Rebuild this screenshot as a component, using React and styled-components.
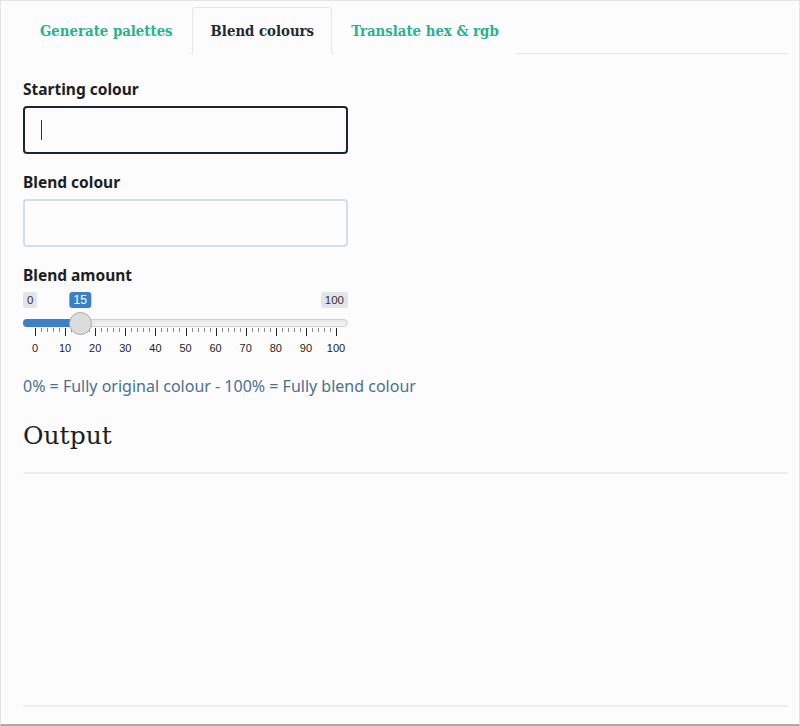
import React from "react";
import styled, { createGlobalStyle } from "styled-components";

const Global = createGlobalStyle`
  html, body { margin: 0; padding: 0; background: #fcfcfc; }
  * { box-sizing: border-box; }
`;

const Frame = styled.div`
  width: 800px;
  height: 726px;
  background: #fcfcfc;
  border: 1px solid #e4e4e4;
  border-bottom: 2px solid #ababab;
  padding: 6px 11px 0 22px;
  display: flex;
  flex-direction: column;
  font-family: "Noto Sans", sans-serif;
  color: #1b1f24;
`;

const TabList = styled.ul`
  list-style: none;
  margin: 0;
  padding: 0;
  display: flex;
  border-bottom: 1px solid #e3e7ea;
  height: 47px;
`;

const Tab = styled.li`
  margin-right: 2px;
  margin-bottom: -1px;
  padding: ${(p) => (p.$active ? "0 17px 0 18px" : "0 16px")};
  display: flex;
  align-items: center;
  border: 1px solid ${(p) => (p.$active ? "#e3e7ea" : "transparent")};
  border-bottom-color: ${(p) => (p.$active ? "#fcfcfc" : "transparent")};
  border-radius: 4px 4px 0 0;
  background: #fcfcfc;
  font-family: "DejaVu Serif", serif;
  font-weight: bold;
  font-stretch: condensed;
  font-size: 14.8px;
  color: ${(p) => (p.$active ? "#232a33" : "#25b48b")};
  white-space: nowrap;
`;

const Panel = styled.div`
  width: 325px;
  display: flex;
  flex-direction: column;
`;

const Label = styled.label`
  display: block;
  font-weight: 700;
  font-size: 15.5px;
  line-height: 24px;
  margin-top: ${(p) => p.$top || 16}px;
  margin-bottom: 5px;
  color: #1b1f24;
`;

const Field = styled.div`
  position: relative;
  height: 48px;
`;

const Input = styled.input`
  width: 100%;
  height: 48px;
  border: 2px solid ${(p) => (p.$focus ? "#1c2632" : "#d6dee4")};
  border-radius: 4px;
  background: #fcfcfc;
  outline: none;
  padding: 0 16px;
  font-size: 16px;
  font-family: "Noto Sans", sans-serif;
`;

const Caret = styled.span`
  position: absolute;
  left: 18px;
  top: 14px;
  width: 1px;
  height: 20px;
  background: #333;
`;

const Slider = styled.div`
  position: relative;
  height: 64px;
  font-family: "Liberation Sans", Arial, sans-serif;
`;

const Badge = styled.span`
  position: absolute;
  top: 0;
  height: 16px;
  line-height: 16px;
  padding: 0 4px;
  border-radius: 3px;
  font-size: 11.5px;
  background: ${(p) => (p.$value ? "#3b7fc4" : "#e1e4e8")};
  color: ${(p) => (p.$value ? "#fff" : "#333")};
  ${(p) => (p.$value ? "font-size: 12px;" : "")}
`;

const Track = styled.div`
  position: absolute;
  left: 0;
  right: 0;
  top: 27px;
  height: 8px;
  border-radius: 4px;
  border: 1px solid #cfcfcf;
  background: linear-gradient(#e6e6e6, #f4f4f4);
`;

const Bar = styled.div`
  position: absolute;
  left: 0;
  top: 27px;
  height: 8px;
  border-radius: 4px 0 0 4px;
  background: #3b7fc4;
`;

const Handle = styled.div`
  position: absolute;
  top: 20px;
  width: 23px;
  height: 23px;
  border-radius: 50%;
  background: #dcdcdc;
  border: 1px solid #a9a9a9;
`;

const Tick = styled.span`
  position: absolute;
  top: 36px;
  width: 1px;
  height: ${(p) => (p.$major ? 8 : 4)}px;
  background: ${(p) => (p.$major ? "#222" : "#8a8a8a")};
`;

const TickText = styled.span`
  position: absolute;
  top: 50px;
  font-size: 11px;
  line-height: 12px;
  color: #222;
  transform: translateX(-50%);
`;

const Help = styled.p`
  margin: 18px 0 0;
  font-size: 16px;
  line-height: 24px;
  color: #4b7090;
  white-space: nowrap;
`;

const Heading = styled.h2`
  margin: 22px 0 0;
  font-family: "DejaVu Serif", serif;
  font-weight: normal;
  font-size: 25px;
  line-height: 32px;
  color: #1b1f24;
`;

const OutputBox = styled.div`
  margin-top: 20px;
  height: 235px;
  border-top: 2px solid #eceeee;
  border-bottom: 2px solid #eceeee;
`;

const LO = 12;
const RANGE = 301;
const VALUE = 15;
const pos = (v) => LO + (v / 100) * RANGE;

export default function App() {
  const ticks = [];
  for (let v = 0; v <= 100; v += 2) ticks.push(v);
  const labels = [0, 10, 20, 30, 40, 50, 60, 70, 80, 90, 100];
  return (
    <>
      <Global />
      <Frame>
        <TabList>
          <Tab>Generate palettes</Tab>
          <Tab $active>Blend colours</Tab>
          <Tab>Translate hex &amp; rgb</Tab>
        </TabList>
        <Panel>
          <Label $top={23}>Starting colour</Label>
          <Field>
            <Input $focus />
            <Caret />
          </Field>
          <Label>Blend colour</Label>
          <Field>
            <Input />
          </Field>
          <Label>Blend amount</Label>
          <Slider>
            <Badge style={{ left: 0 }}>0</Badge>
            <Badge style={{ right: 0 }}>100</Badge>
            <Track />
            <Bar style={{ width: pos(VALUE) }} />
            {ticks.map((v) => (
              <Tick key={v} $major={v % 10 === 0} style={{ left: Math.round(pos(v)) }} />
            ))}
            {labels.map((v) => (
              <TickText key={v} style={{ left: pos(v) }}>{v}</TickText>
            ))}
            <Handle style={{ left: pos(VALUE) - 11.5 }} />
            <Badge $value style={{ left: pos(VALUE), transform: "translateX(-50%)" }}>{VALUE}</Badge>
          </Slider>
        </Panel>
        <Help>0% = Fully original colour - 100% = Fully blend colour</Help>
        <Heading>Output</Heading>
        <OutputBox />
      </Frame>
    </>
  );
}
